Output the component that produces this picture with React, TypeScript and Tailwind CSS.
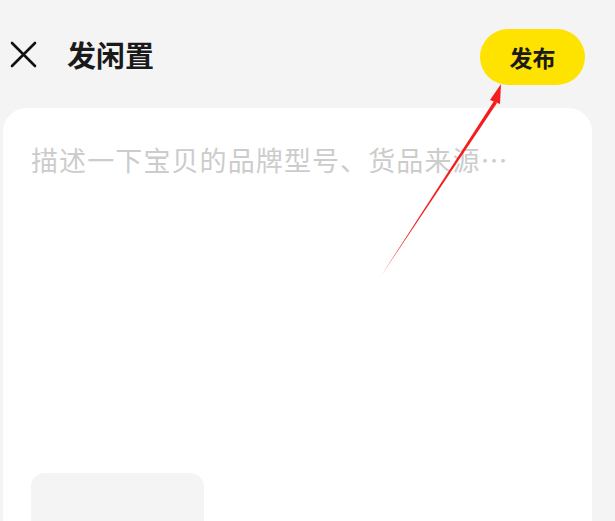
import React from 'react';

const App: React.FC = () => {
  return (
    <div
      className="relative w-[615px] h-[521px] overflow-hidden bg-[#f4f4f4]"
      style={{ fontFamily: '"Noto Sans CJK SC", "Noto Sans", sans-serif' }}
    >
      {/* header */}
      <div className="flex items-center h-[112px] pl-[10px] pr-[30px] pb-[4px]">
        <svg width="27" height="27" viewBox="0 0 27 27" className="shrink-0">
          <path d="M2 2 L25 25 M25 2 L2 25" stroke="#111" strokeWidth="2.6" strokeLinecap="round" />
        </svg>
        <h1 className="ml-[30px] text-[29px] font-bold text-[#1a1a1a] leading-none">发闲置</h1>
        <button className="ml-auto w-[105px] h-[56px] rounded-full bg-[#fee300] text-[23px] font-bold text-[#1a1a1a] mt-[6px]">
          发布
        </button>
      </div>

      {/* card */}
      <div className="mx-[3px] mr-[23px] -mt-[4px] bg-white rounded-t-[24px] h-[440px] pt-[32px] px-[28px]">
        <p className="text-[27px] leading-[40px] text-[#cccccc] tracking-[1.1px]">
          描述一下宝贝的品牌型号、货品来源…
        </p>
        <div className="mt-[293px] w-[173px] h-[120px] rounded-[14px] bg-[#f4f4f4]" />
      </div>

      {/* annotation arrow */}
      <svg className="absolute left-0 top-0 pointer-events-none" width="615" height="521">
        <polygon points="381,276 494,101 497,103" fill="#f41c1c" />
        <polygon points="501,84 490,100 500,104" fill="#f41c1c" />
      </svg>
    </div>
  );
};

export default App;
